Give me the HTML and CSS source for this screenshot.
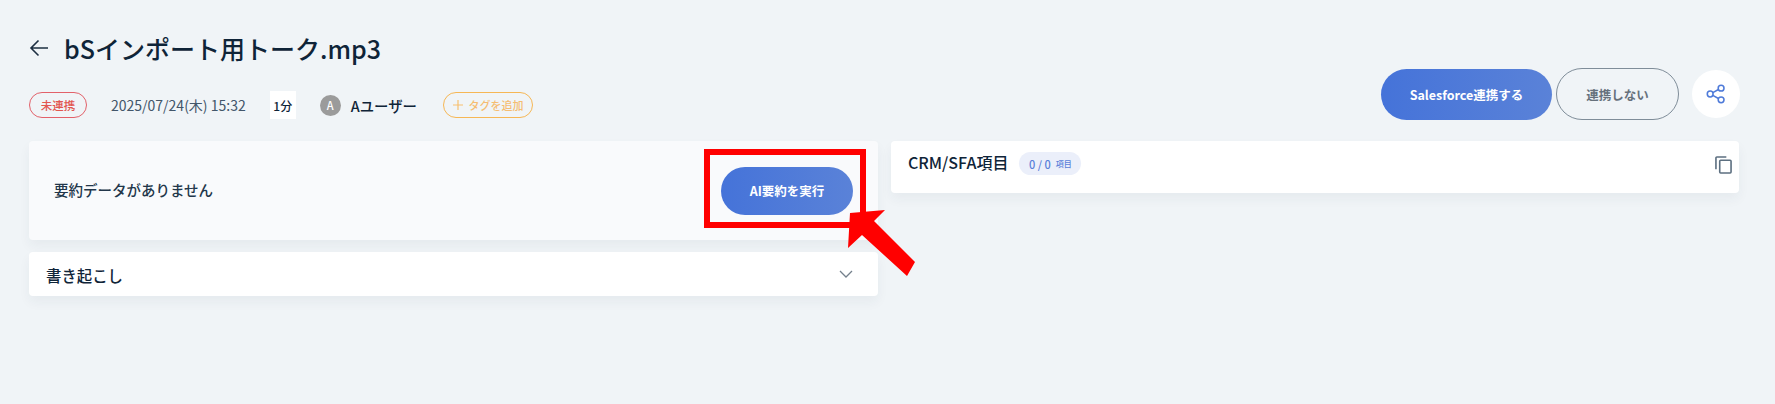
FILE: index.html
```html
<!DOCTYPE html>
<html lang="ja">
<head>
<meta charset="utf-8">
<title>bSインポート用トーク.mp3</title>
<link rel="stylesheet" href="styles.css">
</head>
<body>
<div class="page">
  <header class="header">
    <div class="head-left">
      <div class="title-row">
        <svg class="back" viewBox="0 0 20 18" width="20" height="18"><path d="M19 9H2M9.5 1.5 2 9l7.5 7.5" fill="none" stroke="#1d2f42" stroke-width="1.6"/></svg>
        <h1 class="title">bSインポート用トーク.mp3</h1>
      </div>
      <div class="meta">
        <span class="chip-red">未連携</span>
        <span class="date">2025/07/24(木) 15:32</span>
        <span class="dur">1分</span>
        <span class="user"><span class="avatar">A</span><span class="uname">Aユーザー</span></span>
        <span class="chip-tag"><svg viewBox="0 0 12 12" width="12" height="12"><path d="M6 1v10M1 6h10" stroke="#f7c070" stroke-width="1.2"/></svg>タグを追加</span>
      </div>
    </div>
    <div class="actions">
      <button class="btn-primary btn-sf">Salesforce連携する</button>
      <button class="btn-outline">連携しない</button>
      <span class="share">
        <svg viewBox="0 0 22 22" width="20" height="20" fill="none" stroke="#4f7bd9" stroke-width="1.7"><circle cx="4.6" cy="11" r="3.2"/><circle cx="16.6" cy="4.6" r="3.2"/><circle cx="16.6" cy="17.4" r="3.2"/><path d="M7.5 9.5l6.2-3.4M7.5 12.5l6.2 3.4"/></svg>
      </span>
    </div>
  </header>
  <main class="columns">
    <section class="col">
      <div class="card card-summary">
        <span class="empty">要約データがありません</span>
        <button class="btn-primary btn-ai">AI要約を実行</button>
      </div>
      <div class="card card-trans">
        <span class="card-title trans-title">書き起こし</span>
        <svg viewBox="0 0 14 8" width="14" height="8"><path d="M1 1l6 6 6-6" fill="none" stroke="#74808c" stroke-width="1.3"/></svg>
      </div>
    </section>
    <section class="col">
      <div class="card card-crm">
        <span class="card-title crm-title">CRM/SFA項目</span>
        <span class="count"><b>0 / 0</b><small>項目</small></span>
        <svg class="copy" viewBox="0 0 18 19" width="17" height="18" fill="none" stroke="#5c6f80" stroke-width="1.7"><rect x="5" y="4.5" width="12" height="13.5" rx="1"/><path d="M1 14V2a1 1 0 0 1 1-1h10"/></svg>
      </div>
    </section>
  </main>
</div>
<div class="callout-box"></div>
<svg class="callout-arrow" viewBox="0 0 80 80" width="80" height="80"><path d="M2 3 37 0 26 11 67 52 59 66 14 25 0 38Z" fill="#ff0000"/></svg>
</body>
</html>
```
FILE: styles.css
```css
* { box-sizing: border-box; }
html, body { margin: 0; height: 404px; overflow: hidden; }
body {
  background: #f0f4f7;
  color: #0f2438;
  font-family: "Noto Sans CJK JP", "Noto Sans", sans-serif;
  position: relative;
}
.page { padding: 28px 35px 0 29px; }
.header { display: flex; justify-content: space-between; align-items: flex-start; height: 104px; }
.title-row { display: flex; align-items: center; gap: 15px; height: 40px; }
.back { flex: none; margin-top: 0; }
.title { margin: -1px 0 0; font-size: 25px; font-weight: 500; line-height: 40px; }
.meta { display: flex; align-items: center; margin-top: 23px; height: 28px; }
.chip-red {
  width: 58px; height: 26px; border: 1px solid #e2616a; border-radius: 13px;
  color: #e2564f; font-size: 11.5px; font-weight: 500;
  display: flex; align-items: center; justify-content: center;
}
.date { margin-left: 24px; font-size: 14px; color: #42566a; }
.dur {
  margin-left: 24px; width: 26px; height: 28px; background: #fff;
  font-size: 12px; font-weight: 500; display: flex; align-items: center; justify-content: center;
}
.user { margin-left: 24px; display: flex; align-items: center; gap: 10px; }
.avatar {
  width: 21px; height: 21px; border-radius: 50%; background: #9b9b9b; color: #fff;
  font-size: 11px; font-weight: 500; display: flex; align-items: center; justify-content: center;
}
.uname { font-size: 14.4px; font-weight: 500; }
.chip-tag {
  margin-left: 26px; width: 90px; height: 26px; border: 1px solid #f6b755; border-radius: 13px;
  color: #f5bd72; font-size: 11px; font-weight: 500;
  display: flex; align-items: center; justify-content: center; gap: 4px;
}
.actions { display: flex; align-items: center; margin-top: 40px; height: 52px; }
button { font-family: inherit; cursor: pointer; }
.btn-primary {
  border: 0; color: #fff; font-weight: 700; font-size: 12.5px; border-radius: 26px;
  background: linear-gradient(90deg, #4573d9, #5a82d8);
}
.btn-sf { width: 171px; height: 51px; }
.btn-outline {
  margin-left: 4px; width: 123px; height: 52px; border-radius: 26px;
  border: 1.5px solid #7f8d99; background: transparent; color: #66717c;
  font-size: 12.5px; font-weight: 700;
}
.share {
  margin-left: 13px; width: 48px; height: 48px; border-radius: 50%; background: #fff;
  display: flex; align-items: center; justify-content: center;
}
.columns { display: grid; grid-template-columns: 849px 848px; gap: 13px; margin-top: 9px; }
.col { display: flex; flex-direction: column; gap: 12px; }
.card { border-radius: 4px; background: #fff; box-shadow: 0 6px 12px rgba(40, 60, 80, .05); display: flex; align-items: center; }
.card-summary { height: 99px; background: #f9fafc; padding: 0 25px; justify-content: space-between; }
.empty { font-size: 14.5px; font-weight: 500; color: #22364a; margin-top: -2px; }
.btn-ai { width: 132px; height: 48px; border-radius: 24px; }
.card-trans { height: 44px; padding: 0 25px 0 17px; justify-content: space-between; }
.card-title { font-size: 16px; font-weight: 500; }
.trans-title { font-size: 15.4px; margin-top: 1px; }
.card-crm { height: 52px; padding: 9px 7px 0 17px; align-items: flex-start; }
.count {
  margin-left: 11px; margin-top: 2px; height: 23px; width: 62px; border-radius: 12px; background: #ebeffa;
  display: flex; align-items: center; justify-content: center; gap: 5px; color: #5a7fd9;
}
.count b { font-size: 11px; font-weight: 500; }
.count small { font-size: 8px; font-weight: 500; }
.copy { margin-left: auto; margin-top: 6px; }
.callout-box { position: absolute; left: 704px; top: 149px; width: 162px; height: 79px; border: 6px solid #ff0000; }
.callout-arrow { position: absolute; left: 848px; top: 210px; }
```
